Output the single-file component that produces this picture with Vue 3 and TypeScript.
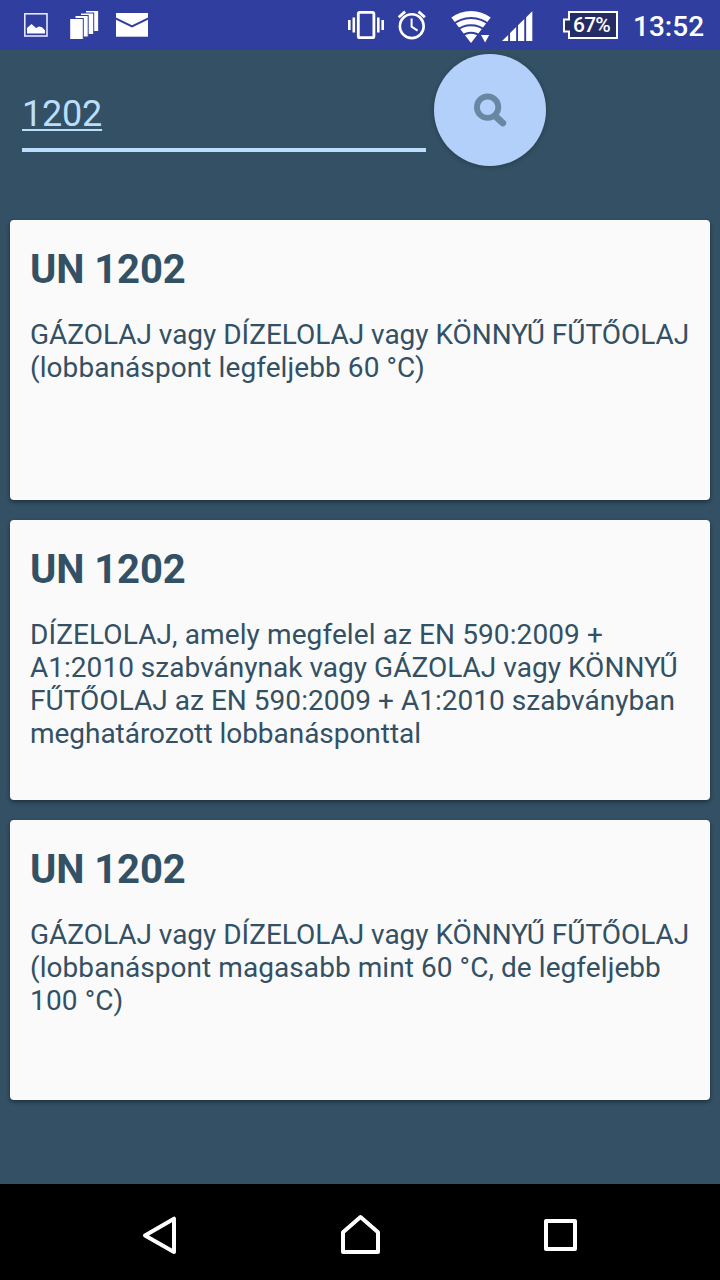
<script setup lang="ts">
import { ref } from 'vue'

interface Line {
  text: string
  tracking: number
}

interface UnEntry {
  id: number
  title: string
  lines: Line[]
}

const query = ref('1202')

const entries: UnEntry[] = [
  {
    id: 1,
    title: 'UN 1202',
    lines: [
      { text: 'GÁZOLAJ vagy DÍZELOLAJ vagy KÖNNYŰ FŰTŐOLAJ', tracking: -0.025 },
      { text: '(lobbanáspont legfeljebb 60 °C)', tracking: 0.08 },
    ],
  },
  {
    id: 2,
    title: 'UN 1202',
    lines: [
      { text: 'DÍZELOLAJ, amely megfelel az EN 590:2009 +', tracking: 0.1 },
      { text: 'A1:2010 szabványnak vagy GÁZOLAJ vagy KÖNNYŰ', tracking: 0.025 },
      { text: 'FŰTŐOLAJ az EN 590:2009 + A1:2010 szabványban', tracking: 0.03 },
      { text: 'meghatározott lobbanásponttal', tracking: -0.04 },
    ],
  },
  {
    id: 3,
    title: 'UN 1202',
    lines: [
      { text: 'GÁZOLAJ vagy DÍZELOLAJ vagy KÖNNYŰ FŰTŐOLAJ', tracking: -0.025 },
      { text: '(lobbanáspont magasabb mint 60 °C, de legfeljebb', tracking: 0.065 },
      { text: '100 °C)', tracking: 0.15 },
    ],
  },
]
</script>

<template>
  <div class="screen">
    <header class="status">
      <svg class="ic-image" width="24" height="50" viewBox="24 0 24 50">
        <rect x="24.8" y="13.8" width="22.2" height="22.2" fill="none" stroke="#e4e7fb" stroke-width="1.6" />
        <path d="M27 33.5V28l4.5-4 4.5 4 3-1.4 3 .6 3 3v3.3z" fill="#fff" />
      </svg>
      <svg class="ic-stack" width="29" height="50" viewBox="70 0 29 50">
        <g fill="#fff" stroke="#303f9f" stroke-width="1">
          <rect x="85.5" y="10.5" width="13.2" height="21" />
          <rect x="80.5" y="13" width="13.2" height="21.5" />
          <rect x="75" y="15.5" width="13.2" height="21.5" />
          <rect x="69.7" y="18.5" width="13.6" height="21" />
        </g>
      </svg>
      <svg class="ic-mail" width="32" height="50" viewBox="116 0 32 50">
        <rect x="116" y="13" width="32" height="23.7" fill="#fff" />
        <path d="M115.5 18.3L132 26.5l16.5-8.2" fill="none" stroke="#303f9f" stroke-width="2" />
      </svg>
      <svg class="ic-vibrate" width="36" height="50" viewBox="348 0 36 50">
        <rect x="358.3" y="12.3" width="15.6" height="25.4" rx="1.5" fill="none" stroke="#fff" stroke-width="2.8" />
        <path d="M349.3 20v10M353.8 17.5v15M378.3 17.5v15M382.7 20v10" stroke="#fff" stroke-width="2.6" />
      </svg>
      <svg class="ic-alarm" width="30" height="50" viewBox="397 0 30 50">
        <circle cx="411.8" cy="26.2" r="11.9" fill="none" stroke="#fff" stroke-width="2.6" />
        <path d="M398.7 17.2l6.4-5.6M424.9 17.2l-6.4-5.6" stroke="#fff" stroke-width="2.8" />
        <path d="M411.6 18.5v8.2l6 4" fill="none" stroke="#fff" stroke-width="2" />
      </svg>
      <svg class="ic-wifi" width="40" height="50" viewBox="451 0 40 50">
        <path d="M471 43l-19.7-25.4C457 13.2 463.7 11 471 11s14 2.2 19.7 6.6z" fill="#fff" />
        <g fill="none" stroke="#303f9f" stroke-width="2">
          <path d="M452 25.3C457.500 20.400 464 18 471 18s13.500 2.400 19 7.300" />
          <path d="M456 30.800C460.500 27 465.500 25.200 471 25.200s10.500 1.800 15 5.600" />
          <path d="M461 36.500C464 34 467.500 32.700 471 32.700s7 1.300 10 3.800" />
        </g>
        <path d="M479 33.600h12v9h-12z" fill="#303f9f" />
        <path d="M481 35h8.200l-4.100 7.500z" fill="#fff" />
      </svg>
      <svg class="ic-signal" width="31" height="50" viewBox="502 0 31 50">
        <path d="M502 41l30.300-29.700V41z" fill="#fff" />
        <path d="M509.100 10v32M517.100 10v32M525.200 10v32" stroke="#303f9f" stroke-width="1.900" />
      </svg>
      <div class="battery">
        <svg width="55" height="50" viewBox="563 0 55 50">
          <path d="M569 12h48v26h-48v-6.500h-5v-12h5z" fill="#242c66" stroke="#fff" stroke-width="2" />
        </svg>
        <span class="battery-text">67%</span>
      </div>
      <time class="clock">13:52</time>
    </header>

    <div class="search">
      <input v-model="query" class="field" type="text" spellcheck="false" />
      <button class="fab" type="button" aria-label="Keresés">
        <svg width="36" height="36" viewBox="472 92 36 36">
          <path d="M496.500 117.300l6.300 5.700" stroke="#6788a3" stroke-width="6.800" stroke-linecap="round" />
          <circle cx="487.600" cy="107.200" r="10.700" fill="none" stroke="#6788a3" stroke-width="5.800" />
        </svg>
      </button>
    </div>

    <main class="list">
      <article v-for="entry in entries" :key="entry.id" class="card">
        <h2 class="title">{{ entry.title }}</h2>
        <p class="body">
          <span
            v-for="line in entry.lines"
            :key="line.text"
            class="line"
            :style="{ letterSpacing: `${line.tracking}px` }"
          >{{ line.text }}</span>
        </p>
      </article>
    </main>

    <nav class="nav">
      <svg width="200" height="96" viewBox="60 1184 200 96">
        <path d="M145 1235.500l29-16.800v33.200z" fill="none" stroke="#fff" stroke-width="4" stroke-linejoin="round" />
      </svg>
      <svg width="200" height="96" viewBox="260 1184 200 96">
        <path d="M343 1252v-19.700l17.500-15.300 17.500 15.300V1252z" fill="none" stroke="#fff" stroke-width="4" stroke-linejoin="round" />
      </svg>
      <svg width="200" height="96" viewBox="460 1184 200 96">
        <rect x="546" y="1221" width="29" height="28" fill="none" stroke="#fff" stroke-width="4" stroke-linejoin="round" />
      </svg>
    </nav>
  </div>
</template>

<style>
body {
  margin: 0;
  background: #335064;
}
</style>

<style scoped>
.screen {
  width: 720px;
  height: 1280px;
  display: flex;
  flex-direction: column;
  overflow: hidden;
  background: #335064;
  color: #335064;
  font-family: Roboto, 'Noto Sans', sans-serif;
}

svg {
  display: block;
  flex: none;
}

.status {
  flex: none;
  display: flex;
  height: 50px;
  padding-left: 24px;
  background: #303f9f;
}

.ic-stack {
  margin-left: 22px;
}

.ic-mail {
  margin-left: 17px;
}

.ic-vibrate {
  margin-left: 200px;
}

.ic-alarm {
  margin-left: 13px;
}

.ic-wifi {
  margin-left: 24px;
}

.ic-signal {
  margin-left: 11px;
}

.battery {
  position: relative;
  flex: none;
  width: 55px;
  margin-left: 30px;
}

.battery-text {
  position: absolute;
  top: 0;
  left: 10px;
  color: #fff;
  font-size: 21px;
  font-weight: 500;
  letter-spacing: -0.8px;
  line-height: 50px;
}

.clock {
  margin-left: 15px;
  color: #fff;
  font-size: 28px;
  font-weight: 500;
  line-height: 53px;
  white-space: nowrap;
}

.search {
  flex: none;
  display: flex;
  align-items: flex-start;
  gap: 8px;
  height: 166px;
  padding: 4px 0 0 22px;
  box-sizing: border-box;
}

.field {
  box-sizing: border-box;
  width: 404px;
  height: 59px;
  margin: 39px 0 0;
  padding: 0 0 13px;
  border: 0;
  border-bottom: 4px solid #bbdefb;
  border-radius: 0;
  outline: none;
  background: transparent;
  color: #bbdefb;
  font-family: inherit;
  font-size: 36px;
  line-height: 42px;
  letter-spacing: -0.2px;
  text-decoration: underline;
  text-decoration-thickness: 2px;
  text-underline-offset: 3px;
  text-decoration-skip-ink: none;
}

.fab {
  display: flex;
  align-items: center;
  justify-content: center;
  width: 112px;
  height: 112px;
  padding: 0;
  border: 0;
  border-radius: 50%;
  background: #b3d0fb;
  box-shadow: 0 1px 5px rgba(0, 0, 0, 0.25);
}

.list {
  flex: 1;
  display: flex;
  flex-direction: column;
  gap: 20px;
  padding: 4px 10px 0;
}

.card {
  flex: none;
  box-sizing: border-box;
  height: 280px;
  padding: 26px 0 0 20px;
  border-radius: 4px;
  background: #fafafa;
  box-shadow: 0 2px 4px rgba(0, 0, 0, 0.4);
}

.title {
  margin: 0;
  font-size: 40px;
  font-weight: 700;
  letter-spacing: -0.1px;
  line-height: 47px;
}

.body {
  margin: 25px 0 0;
  font-size: 28px;
  line-height: 33px;
}

.line {
  display: block;
  white-space: nowrap;
}

.nav {
  flex: none;
  display: flex;
  justify-content: center;
  height: 96px;
  background: #000;
}
</style>
